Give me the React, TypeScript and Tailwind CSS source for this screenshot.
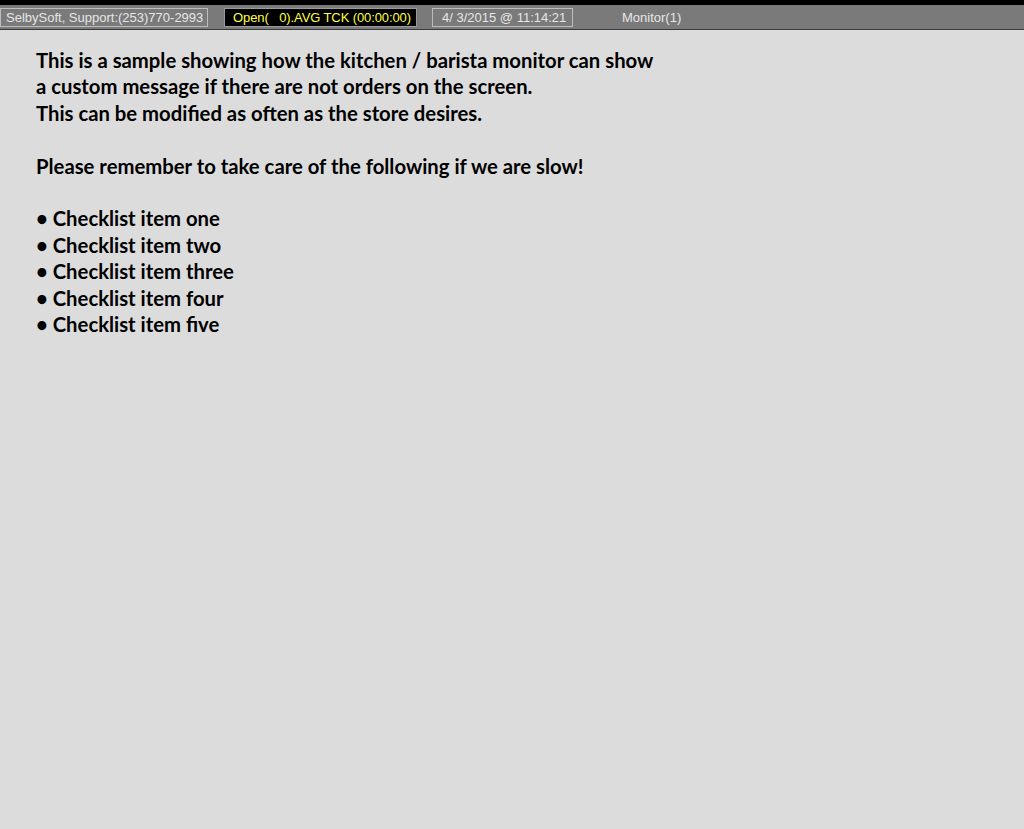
export default function App() {
  const items = ["one", "two", "three", "four", "five"];
  return (
    <div className="w-[1024px] h-[829px] bg-[#dcdcdc] flex flex-col overflow-hidden">
      <div className="h-[5px] bg-black" />
      <div className="h-[24px] bg-[#7a7a7a] flex items-center text-[13px] font-['Liberation_Sans',Arial,sans-serif] leading-none">
        <div className="ml-0 w-[208px] h-[19px] border border-[#bdbdbd] text-[#e6e6e6] flex items-center pl-[5px]">SelbySoft, Support:(253)770-2993</div>
        <div className="ml-[16px] w-[193px] h-[19px] bg-black border border-[#9a9a9a] text-[#ffff40] flex items-center pl-[8px] whitespace-pre tracking-[-0.1px]">Open(   0).AVG TCK (00:00:00)</div>
        <div className="ml-[15px] w-[141px] h-[19px] border border-[#bdbdbd] text-[#e6e6e6] flex items-center pl-[9px]">4/ 3/2015 @ 11:14:21</div>
        <div className="ml-[49px] text-[#e6e6e6]">Monitor(1)</div>
      </div>
      <div className="h-[1px] bg-[#3a3a3a]" />
      <div className="pl-[36px] pt-[17px] font-['Lato',sans-serif] font-bold text-[20.3px] leading-[26.4px] text-black">
        <div>This is a sample showing how the kitchen / barista monitor can show</div>
        <div>a custom message if there are not orders on the screen.</div>
        <div>This can be modified as often as the store desires.</div>
        <div>&nbsp;</div>
        <div>Please remember to take care of the following if we are slow!</div>
        <div>&nbsp;</div>
        {items.map((i) => (
          <div key={i}>• Checklist item {i}</div>
        ))}
      </div>
    </div>
  );
}
